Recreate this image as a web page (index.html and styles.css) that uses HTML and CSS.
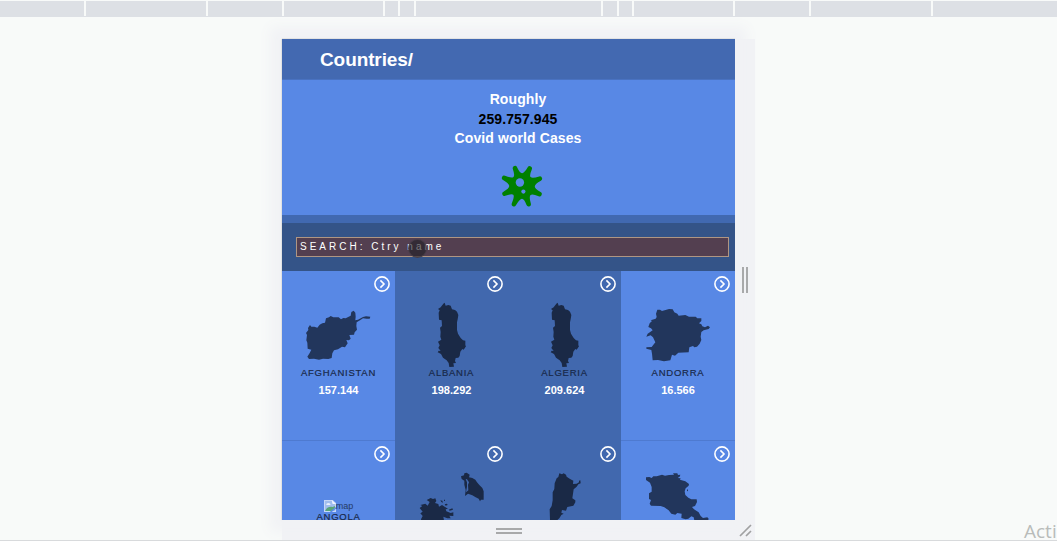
FILE: index.html
```html
<!DOCTYPE html>
<html lang="en">
<head>
<meta charset="utf-8">
<title>Countries</title>
<link rel="stylesheet" href="styles.css">
</head>
<body>
<svg class="defs" width="0" height="0">
  <symbol id="arrow" viewBox="0 0 16 16"><circle cx="8" cy="8" r="7.1"/><path d="M6.4 4.4 10 8l-3.6 3.6"/></symbol>
</svg>
<div class="ruler"><i></i><i></i><i></i><i></i><i></i><i></i><i></i><i></i><i></i><i></i><i></i><i></i><i></i></div>
<main class="stage">
  <div class="device">
    <div class="screen">
      <header class="header"><h1>Countries/</h1></header>
      <section class="summary">
        <p>Roughly</p><p class="total">259.757.945</p><p>Covid world Cases</p>
        <svg class="virus" viewBox="0 0 120 120">
          <path fill="#008000" stroke="#008000" stroke-width="13" stroke-linejoin="round" d="M40 9Q59 50 82 10Q63.5 53.5 111 39Q69.5 61 110 83Q65.5 64.5 79 112Q62 68 37 112Q56.5 65 10 82Q50.5 60.5 9 37Q55.5 55 40 9Z"/>
          <circle cx="54" cy="50" r="12" fill="#5888e5"/><circle cx="64" cy="76" r="6" fill="#5888e5"/>
        </svg>
      </section>
      <section class="search"><div class="field">SEARCH: Ctry name<span class="touch"></span></div></section>
      <section class="grid">
        <article class="cell">
          <svg class="go"><use href="#arrow"/></svg>
          <svg class="map" viewBox="78 96 195 198"><path d="M90 165 94 170 103 170 112 173 119 164 127 160 135 158 138 145 147 142 152 138 160 142 176 142 183 148 190 144 197 145 212 137 214 126 221 122 226 128 227 140 226 151 234 149 249 141 258 139 271 140 269 146 260 146 249 145 240 151 230 157 229 168 231 179 224 187 222 194 208 195 212 206 207 211 199 210 203 220 195 232 186 230 174 238 162 241 157 250 155 264 145 267 129 266 117 269 102 266 87 267 82 260 89 249 94 239 83 236 82 218 79 211 81 195 78 189 85 180 84 174Z"/></svg>
          <h2>AFGHANISTAN</h2><strong>157.144</strong>
        </article>
        <article class="cell dark">
          <svg class="go"><use href="#arrow"/></svg>
          <svg class="map" viewBox="73 96 195 198"><path d="M150 98 153 107 161 105 168 107 172 118 181 120 187 125 191 135 189 148 187 157 187 180 190 191 198 204 205 211 212 212 212 226 214 229 207 239 203 237 197 245 195 258 191 263 183 264 181 273 184 279 176 280 178 290 164 291 162 279 156 271 145 263 139 252 129 247 132 242 138 243 131 234 135 226 130 215 140 209 137 200 138 186 136 173 142 168 141 151 133 149 132 128 135 121 130 117 138 112 146 101Z"/></svg>
          <h2>ALBANIA</h2><strong>198.292</strong>
        </article>
        <article class="cell dark">
          <svg class="go"><use href="#arrow"/></svg>
          <svg class="map" viewBox="73 96 195 198"><path d="M150 98 153 107 161 105 168 107 172 118 181 120 187 125 191 135 189 148 187 157 187 180 190 191 198 204 205 211 212 212 212 226 214 229 207 239 203 237 197 245 195 258 191 263 183 264 181 273 184 279 176 280 178 290 164 291 162 279 156 271 145 263 139 252 129 247 132 242 138 243 131 234 135 226 130 215 140 209 137 200 138 186 136 173 142 168 141 151 133 149 132 128 135 121 130 117 138 112 146 101Z"/></svg>
          <h2>ALGERIA</h2><strong>209.624</strong>
        </article>
        <article class="cell">
          <svg class="go"><use href="#arrow"/></svg>
          <svg class="map" viewBox="78 96 195 198"><path d="M112 119 120 119 126 123 134 121 147 117 158 118 163 127 172 131 176 137 196 135 207 140 227 140 232 145 244 145 244 153 237 160 244 163 247 169 255 172 264 167 270 172 266 177 251 181 244 186 242 200 244 210 239 221 231 230 223 232 219 228 208 232 206 247 175 248 165 257 156 254 151 271 132 274 114 270 98 271 96 251 94 240 79 236 79 232 95 231 106 217 99 202 92 196 79 200 83 191 98 181 93 175 85 171 89 160 96 153 92 151 107 146 110 141 108 131Z"/></svg>
          <h2>ANDORRA</h2><strong>16.566</strong>
        </article>
        <article class="cell">
          <svg class="go"><use href="#arrow"/></svg>
          <div class="missing"><svg viewBox="0 0 11 12" preserveAspectRatio="none"><path fill="#c5d7f7" d="M0 0h8l3 3v9H0z"/><path fill="#5b8cdb" d="M1 1h6.5v2.5H10V11H1z" opacity=".35"/><path fill="#e8effb" d="M2 5q0-2 2-2t2 2z"/><path fill="#58a477" d="M1 11q2-5 7-4l2-1v2L7 11z"/><path fill="#f0f5ff" d="m7 0 4 4H8z"/><path stroke="#5888e5" stroke-width="1.3" d="m6 12 6-5"/></svg>map</div>
          <h2>ANGOLA</h2>
        </article>
        <article class="cell dark">
          <svg class="go"><use href="#arrow"/></svg>
          <svg class="map" viewBox="478 126 195 198"><path fill-rule="evenodd" d="M604 139 613 136 614 130 621 128 630 134 628 142 638 144 647 149 652 157 659 165 668 174 672 184 672 209 664 209 661 214 657 206 648 202 638 196 625 191 616 198 618 180 614 164 614 152 606 147ZM618 147 622 157 622 170 619 187 626 181 625 164 628 157 622 148Z"/><path d="M513 204 520 207 527 205 530 213 526 219 536 222 538 230 547 225 555 230 565 236 558 238 560 244 573 249 581 247 581 258 569 257 573 265 563 265 551 260 553 271 535 290 490 290 484 268 489 258 482 250 489 245 480 234 488 228 482 225 497 221 504 227 510 216 501 210ZM542 211l6 1 2 6-5-2zM553 209l3 0 0 4-3 0zM555 223l7-2 2 4-6 2zM567 239l11-4 2 4-10 3z"/></svg>
        </article>
        <article class="cell dark">
          <svg class="go"><use href="#arrow"/></svg>
          <svg class="map" viewBox="98 126 195 198"><path d="M180 130 188 133 193 130 200 134 202 140 211 146 222 152 221 162 232 161 239 157 239 152 243 151 244 160 237 163 232 170 223 178 221 191 219 205 228 211 228 217 222 227 204 231 200 242 188 240 186 248 193 251 186 255 180 265 173 271 170 310 155 310 152 270 151 238 157 228 160 211 160 187 165 177 166 160 172 145 177 141Z"/></svg>
        </article>
        <article class="cell">
          <svg class="go"><use href="#arrow"/></svg>
          <svg class="map" viewBox="438 126 195 198"><path d="M438 142 448 141 455 144 460 139 470 139 486 134 495 137 507 135 522 134 519 130 532 130 534 135 541 134 539 140 533 144 542 145 540 149 556 154 567 162 566 167 557 175 554 184 556 195 565 203 574 208 590 208 591 216 585 228 576 231 582 238 596 247 602 258 609 264 622 262 626 266 620 285 585 280 581 262 574 259 565 266 557 268 544 264 545 251 532 249 526 254 514 251 506 241 493 232 482 228 453 227 449 221 453 210 447 207 447 190 455 185 455 171 450 158 438 150ZM561 178l3 1 0 5-3-1z"/></svg>
        </article>
      </section>
    </div>
    <div class="handle-right"><i></i><i></i></div>
    <div class="handle-bottom"><i></i><i></i></div>
    <svg class="handle-corner" viewBox="0 0 13 13"><path d="M1 12 12 1M7 12l5-5"/></svg>
  </div>
  <span class="watermark">Acti</span>
</main>
</body>
</html>
```
FILE: styles.css
```css
* { box-sizing: border-box; }
body { margin: 0; width: 1057px; height: 541px; overflow: hidden; background: #f8faf9; font-family: "Liberation Sans", Arial, sans-serif; display: flex; flex-direction: column; }
.defs { position: absolute; }
.ruler { height: 17px; flex: none; padding-top: 1px; border-bottom: 1px solid #dde0e5; display: grid; grid-template-columns: 84px 120px 74px 99px 13px 14px 185px 14px 13px 99px 74px 120px 124px; column-gap: 2px; }
.ruler i { background: #dde0e5; }
.stage { flex: 1; position: relative; border-bottom: 1px solid #d8dadc; padding: 22px 302px 0 282px; overflow: hidden; }
.device { display: grid; grid-template-columns: 453px 20px; grid-template-rows: 481px 20px; background: #f1f2f5; }
.screen { overflow: hidden; box-shadow: 0 -1px 0 0 #e2e3e3, -1px 0 0 0 #e2e3e3, 0 0 12px 12px #f1f2f5; }
.header { height: 41px; background: #4369b1; border-bottom: 1px solid #4972c1; padding: 10px 38px; }
.header h1 { margin: 0; color: #fff; font-size: 19px; line-height: 22px; letter-spacing: -.1px; }
.summary { height: 135px; background: #5888e5; color: #fff; text-align: center; padding: 10px 0 0 19px; font-size: 14px; font-weight: bold; line-height: 19.5px; letter-spacing: .1px; }
.summary p { margin: 0; }
.summary .total { color: #000; }
.virus { display: block; width: 42px; height: 42px; margin: 16px auto 0 200px; }
.search { height: 56px; background: #345488; border-top: 8px solid #4169b1; padding: 14px 6px 14px 14px; }
.field { position: relative; height: 20px; border: 1px solid #af9683; background: #533f50; color: #fff; font: 10px/18px "Liberation Sans", Arial, sans-serif; letter-spacing: 3px; padding-left: 3px; }
.touch { position: absolute; left: 111px; top: 1px; width: 19px; height: 19px; border-radius: 50%; background: rgba(30, 30, 35, .6); border: 1px solid rgba(75, 65, 75, .8); }
.grid { display: grid; grid-template-columns: 113px 113px 113px 114px; grid-auto-rows: 170px; }
.cell { background: #5888e5; border-bottom: 1px solid #4e7ad0; padding-top: 5px; display: flex; flex-direction: column; align-items: center; }
.dark { background: #4168ae; border-color: #4168ae; }
.go { width: 16px; height: 16px; align-self: flex-end; margin-right: 5px; flex: none; fill: none; stroke: #fff; stroke-width: 1.6; }
.map { width: 65px; height: 66px; margin-top: 10px; flex: none; fill: #22365c; }
.dark .map { fill: #1a2946; }
.cell h2 { margin: -1px 0 0; font: 9.5px/12px "Liberation Sans", Arial, sans-serif; letter-spacing: .75px; color: #182849; -webkit-text-stroke: .2px #182849; }
.cell strong { margin-top: 5px; color: #fff; font-size: 11px; line-height: 13px; }
.missing { display: flex; align-items: center; margin-top: 38px; height: 12px; color: #243a66; font-size: 9px; line-height: 11px; }
.missing svg { width: 12px; height: 12px; }
.missing + h2 { margin-top: -1px; }
.handle-right { display: flex; gap: 2px; align-self: center; justify-content: center; }
.handle-right i { width: 2px; height: 26px; background: #a8a9aa; }
.handle-bottom { display: flex; flex-direction: column; gap: 2px; align-self: center; align-items: center; padding-top: 2px; }
.handle-bottom i { width: 26px; height: 2px; background: #a8a9aa; }
.handle-corner { width: 13px; height: 13px; margin: 4px; stroke: #a0a1a2; stroke-width: 1.7; }
.watermark { position: absolute; left: 1024px; bottom: -2px; color: #b9bcba; font: 19px/22px "Open Sans", sans-serif; }
```
